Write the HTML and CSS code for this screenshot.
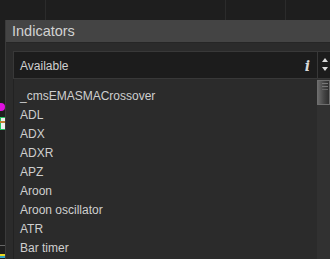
FILE: index.html
```html
<!DOCTYPE html>
<html lang="en">

<head>
    <meta charset="UTF-8">
    <meta name="viewport" content="width=device-width, initial-scale=1.0">
    <title>Indicators</title>
    <link rel="stylesheet" href="styles.css">
</head>

<body>
    <div class="chart">
        <div class="grid-line" style="left: 45px;"></div>
        <div class="grid-line" style="left: 225px;"></div>
        <div class="grid-line" style="left: 285px;"></div>
        <div class="mark-dot"></div>
        <div class="mark-box"><span></span></div>
        <div class="mark-line"></div>
        <div class="mark-yellow"></div>
    </div>

    <div class="panel">
        <div class="panel-title">Indicators</div>
        <div class="panel-body">
            <div class="search">
                <div class="field">
                    <span>Available</span>
                    <span class="info">i</span>
                </div>
                <div class="spin">
                    <span class="arrow-up"></span>
                    <span class="arrow-down"></span>
                </div>
            </div>
            <div class="list-wrap">
                <ul class="list">
                    <li>_cmsEMASMACrossover</li>
                    <li>ADL</li>
                    <li>ADX</li>
                    <li>ADXR</li>
                    <li>APZ</li>
                    <li>Aroon</li>
                    <li>Aroon oscillator</li>
                    <li>ATR</li>
                    <li>Bar timer</li>
                </ul>
                <div class="scrollbar">
                    <div class="thumb"></div>
                </div>
            </div>
        </div>
    </div>
</body>

</html>
```

FILE: styles.css
```css
html,
body {
    height: 259px;
    overflow: hidden;
}

body {
    margin: 0;
    background-color: #1e1e1e;
    font-family: "Liberation Sans", Arial, sans-serif;
    position: relative;
}

/* chart behind the dialog */
.chart {
    position: absolute;
    inset: 0;
}

.grid-line {
    position: absolute;
    top: 0;
    bottom: 0;
    width: 1px;
    background: #2b2b2b;
}

.mark-dot {
    position: absolute;
    left: -3px;
    top: 103px;
    width: 8px;
    height: 8px;
    border-radius: 50%;
    background: #e010e0;
}

.mark-box {
    position: absolute;
    left: 0;
    top: 117px;
    width: 4px;
    height: 11px;
    border: 1px solid #22c55e;
    background: #f0f0f0;
}

.mark-box span {
    position: absolute;
    left: -1px;
    right: -1px;
    top: 3px;
    height: 2px;
    background: #c08030;
}

.mark-line {
    position: absolute;
    left: 0;
    top: 245px;
    width: 5px;
    height: 1px;
    background: #666;
}

.mark-yellow {
    position: absolute;
    left: 0;
    top: 254px;
    width: 5px;
    height: 2px;
    background: #e8d820;
    box-shadow: 0 2px 0 #30a0c0;
}

/* dialog */
.panel {
    position: relative;
    margin: 20px 0 0 5px;
    width: 325px;
    background: #2b2b2b;
    border-left: 1px solid #3a3a3a;
}

.panel-title {
    height: 22px;
    line-height: 23px;
    padding-left: 6px;
    background: #444444;
    border-bottom: 1px solid #262626;
    color: #d2d2d2;
    font-size: 14.5px;
}

.panel-body {
    padding: 8px 0 0 7px;
}

.search {
    display: flex;
    height: 28px;
}

.field {
    flex: 1;
    display: flex;
    align-items: center;
    justify-content: space-between;
    padding: 1px 7px 0 6px;
    background: #1c1c1c;
    border: 1px solid #383838;
    border-right: none;
    color: #d0d0d0;
    font-size: 12px;
}

.info {
    font-family: "DejaVu Serif", "Liberation Serif", serif;
    font-style: italic;
    font-weight: bold;
    font-size: 14px;
    color: #d8d8d8;
}

.spin {
    width: 14px;
    display: flex;
    flex-direction: column;
    align-items: center;
    justify-content: space-between;
    padding: 6px 0 7px;
    box-sizing: border-box;
    background: #1c1c1c;
    border-left: 1px solid #383838;
    border-top: 1px solid #383838;
    border-bottom: 1px solid #383838;
}

.arrow-up,
.arrow-down {
    width: 0;
    height: 0;
    border-left: 3.5px solid transparent;
    border-right: 3.5px solid transparent;
}

.arrow-up {
    border-bottom: 4px solid #dcdcdc;
}

.arrow-down {
    border-top: 4px solid #dcdcdc;
}

.list-wrap {
    display: flex;
    height: 200px;
}

.list {
    flex: 1;
    list-style: none;
    margin: 0;
    padding: 8px 0 0 6px;
    border-left: 1px solid #222;
}

.list li {
    height: 19px;
    line-height: 19px;
    color: #cfcfcf;
    font-size: 12px;
    white-space: nowrap;
}

.scrollbar {
    width: 14px;
    background: #313131;
    padding-top: 1px;
}

.thumb {
    width: 11px;
    height: 23px;
    border: 1px solid #6e6e6e;
    background:
        linear-gradient(#777, #777) 4px 2px / 6px 1px no-repeat,
        linear-gradient(#777, #777) 4px 5px / 6px 1px no-repeat,
        linear-gradient(#666, #666) 4px 8px / 6px 1px no-repeat,
        linear-gradient(to right, #6a6a6a, #444 55%, #2e2e2e);
}
```
